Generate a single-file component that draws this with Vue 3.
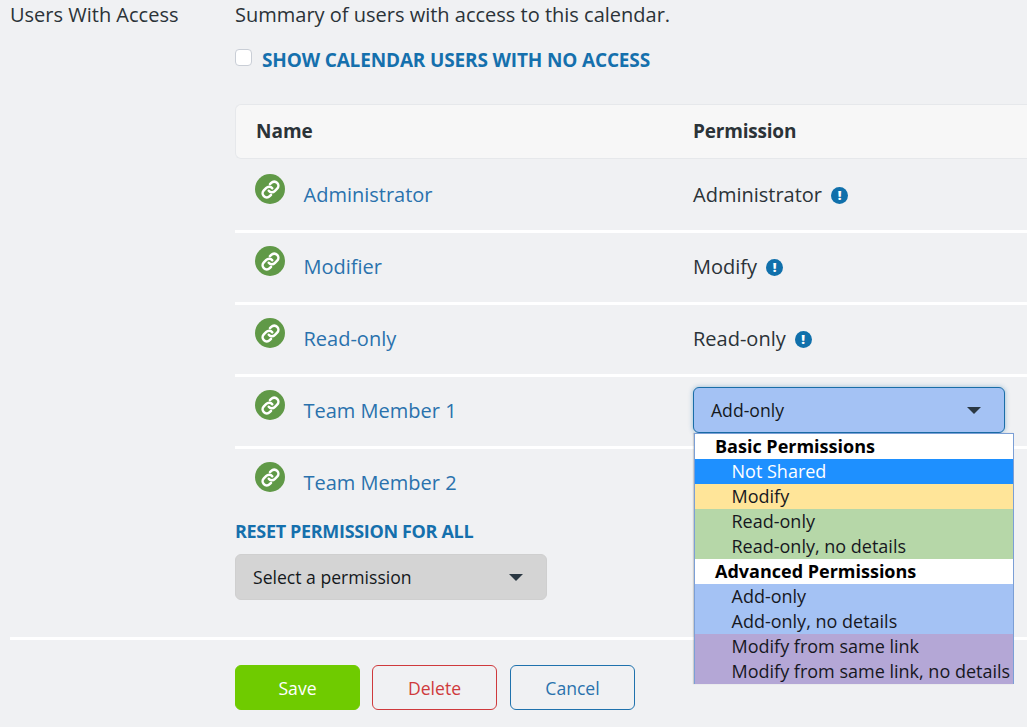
<script setup>
const users = [
  { name: 'Administrator', perm: 'Administrator', info: true },
  { name: 'Modifier', perm: 'Modify', info: true },
  { name: 'Read-only', perm: 'Read-only', info: true },
  { name: 'Team Member 1', select: true },
  { name: 'Team Member 2', last: true }
]
const options = [
  { t: 'Basic Permissions', c: 'group' },
  { t: 'Not Shared', c: 'sel' },
  { t: 'Modify', c: 'yellow' },
  { t: 'Read-only', c: 'green' },
  { t: 'Read-only, no details', c: 'green' },
  { t: 'Advanced Permissions', c: 'group' },
  { t: 'Add-only', c: 'blue' },
  { t: 'Add-only, no details', c: 'blue' },
  { t: 'Modify from same link', c: 'purple' },
  { t: 'Modify from same link, no details', c: 'purple' }
]
</script>

<template>
  <div class="page">
    <div class="section">
      <div class="label">Users With Access</div>
      <div class="content">
        <div class="summary">Summary of users with access to this calendar.</div>
        <div class="check-row">
          <span class="check"></span>
          <span class="check-text">SHOW CALENDAR USERS WITH NO ACCESS</span>
        </div>
        <div class="thead">
          <div class="c-name">Name</div>
          <div class="c-perm">Permission</div>
        </div>
        <div v-for="u in users" :key="u.name" class="row" :class="{ last: u.last }">
          <div class="c-name name-cell">
            <span class="badge">
              <svg viewBox="0 0 24 24" width="21" height="21" fill="none" stroke="#fff" stroke-width="2.9" stroke-linecap="round" stroke-linejoin="round">
                <path d="M10 13.5a4.6 4.6 0 0 0 6.8.4l2.8-2.8a4.7 4.7 0 0 0-6.7-6.7l-1.5 1.5" />
                <path d="M14 10.5a4.6 4.6 0 0 0-6.8-.4l-2.8 2.8a4.7 4.7 0 0 0 6.7 6.7l1.5-1.5" />
              </svg>
            </span>
            <span class="user-link">{{ u.name }}</span>
          </div>
          <div class="c-perm perm-cell">
            <template v-if="u.perm">
              <span>{{ u.perm }}</span>
              <span v-if="u.info" class="info">!</span>
            </template>
            <div v-if="u.select" class="select-wrap">
              <div class="select blue-select">
                <span>Add-only</span><span class="arrow"></span>
              </div>
              <ul class="menu">
                <li v-for="o in options" :key="o.t" :class="o.c">{{ o.t }}</li>
              </ul>
            </div>
          </div>
        </div>
        <div class="reset-label">RESET PERMISSION FOR ALL</div>
        <div class="select grey-select">
          <span>Select a permission</span><span class="arrow"></span>
        </div>
      </div>
    </div>
    <div class="divider"></div>
    <div class="actions">
      <button class="btn save">Save</button>
      <button class="btn delete">Delete</button>
      <button class="btn cancel">Cancel</button>
    </div>
  </div>
</template>

<style>
html, body { margin: 0; background: #f0f1f3; }
</style>

<style scoped>
.page {
  width: 1027px;
  height: 727px;
  overflow: hidden;
  background: #f0f1f3;
  font-family: "Open Sans", "Noto Sans", sans-serif;
  color: #2b3338;
  font-size: 20px;
  box-sizing: border-box;
  padding-left: 10px;
}
.section { display: flex; }
.label { width: 225px; flex: none; font-size: 20px; line-height: 30px; }
.content { width: 820px; flex: none; }
.summary { font-size: 20px; line-height: 30px; }
.check-row { display: flex; align-items: center; margin-top: 15px; height: 30px; }
.check {
  width: 15px; height: 15px; border: 1px solid #c9ced6; border-radius: 4px;
  background: #fff; margin-right: 10px; margin-top: -6px;
}
.check-text { font-size: 19px; font-weight: 700; color: #1570ad; letter-spacing: -0.15px; }
.thead {
  display: flex; align-items: center; margin-top: 29px; height: 51px; padding-bottom: 2px;
  background: #f7f7f7; border: 1px solid #e6e8eb; border-right: 0; border-radius: 6px 0 0 6px;
  font-weight: 700; font-size: 19px; margin-bottom: 2px; box-sizing: content-box;
}
.thead .c-name { padding-left: 20px; width: 457px; flex: none; box-sizing: border-box; }
.thead .c-perm { letter-spacing: -0.2px; }
.row { display: flex; height: 69px; border-bottom: 3px solid #fff; }
.row.last { border-bottom: 0; height: 60px; }
.c-name { width: 458px; flex: none; }
.name-cell { display: flex; box-sizing: border-box; padding-left: 20px; padding-top: 13px; }
.badge {
  width: 30px; height: 30px; border-radius: 50%; background: #609947;
  display: flex; align-items: center; justify-content: center; flex: none;
}
.user-link { color: #2a72ad; margin-left: 18.5px; margin-top: 5px; line-height: 32px; font-size: 20px; }
.perm-cell { display: flex; align-items: flex-start; font-size: 20px; line-height: 32px; padding-top: 18px; box-sizing: border-box; }
.info {
  width: 17px; height: 17px; border-radius: 50%; background: #1070ab; color: #fff;
  font-size: 13px; font-weight: 800; line-height: 17px; text-align: center; margin-left: 9px; margin-top: 8px;
}
.select-wrap { position: relative; margin-top: -8px; }
.select {
  width: 312px; height: 46px; box-sizing: border-box; border-radius: 6px;
  display: flex; align-items: center; justify-content: space-between;
  padding: 0 23px 0 17px; font-size: 17.6px; color: #15191c;
}
.blue-select {
  background: #a4c2f4; border: 1px solid #1a6ea8;
  box-shadow: 0 0 5px rgba(30, 110, 170, 0.45);
}
.grey-select { background: #d4d4d4; border: 1px solid #cfcfcf; margin-top: 11px; }
.arrow {
  width: 0; height: 0; border-left: 7px solid transparent; border-right: 7px solid transparent;
  border-top: 7px solid #2b3843;
}
.menu {
  position: absolute; left: 1px; top: 46px; width: 320px; margin: 0; padding: 0;
  list-style: none; box-sizing: border-box; border: 1px solid #7b9fd6; border-top-width: 1px;
  border-bottom: 0; background: #fff; font-size: 18px; line-height: 25px; z-index: 5;
  color: #17181f; box-shadow: -1px 0 1px rgba(0, 0, 0, 0.15);
}
.menu li { height: 25px; padding-left: 36.5px; white-space: nowrap; }
.menu .group { background: #fff; font-weight: 700; padding-left: 20px; color: #000; }
.menu .sel { background: #1e90ff; color: #fff; }
.menu .yellow { background: #ffe599; }
.menu .green { background: #b6d7a8; }
.menu .blue { background: #a4c2f4; }
.menu .purple { background: #b4a7d6; }
.reset-label { font-size: 18px; font-weight: 700; color: #1570ad; letter-spacing: -0.33px; line-height: 24px; margin-top: 10px; }
.divider { height: 3px; background: #fff; margin-top: 37px; }
.actions { display: flex; padding-left: 225px; margin-top: 25px; }
.btn {
  width: 125px; height: 45px; border-radius: 6px; box-sizing: border-box; font-family: inherit;
  font-size: 17.6px; background: transparent; margin-right: 12px; padding: 0;
}
.save { background: #6fcb00; border: 1px solid #6fcb00; color: #fff; }
.delete { border: 1px solid #cf3a3c; color: #cf3a3c; margin-right: 13px; }
.cancel { border: 1px solid #1f72ad; color: #2a72ad; }
</style>
